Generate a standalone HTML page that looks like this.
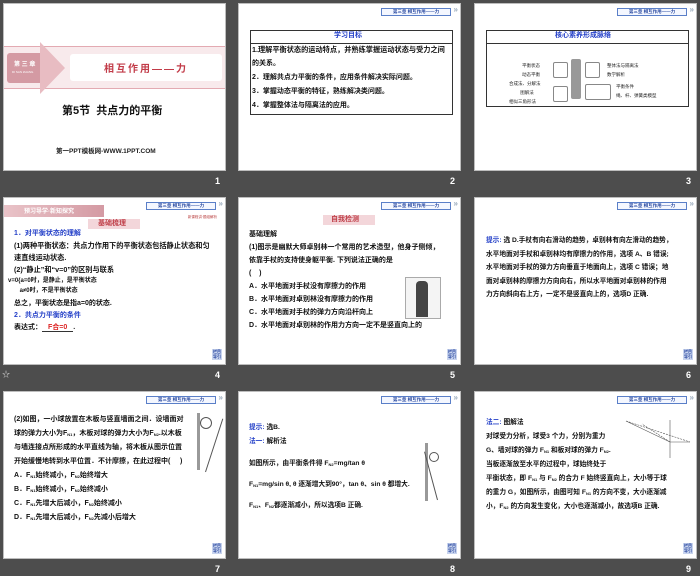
<!DOCTYPE html>
<html><head><meta charset="utf-8"><style>
*{margin:0;padding:0;box-sizing:border-box}
body{width:700px;height:576px;background:#4d4d4d;position:relative;overflow:hidden;font-family:"Liberation Sans","Noto Sans CJK SC",sans-serif}
.s{position:absolute;width:223px;height:168px;background:#fff;border:1px solid #bdbdbd;overflow:hidden}
.n{position:absolute;color:#fff;font-size:9px;font-weight:bold}
.tag{position:absolute;right:9px;top:4px;width:70px;height:8px;border:1px solid #5a7fc8;font-size:4.5px;color:#2a4aa0;font-weight:bold;text-align:center;line-height:6px;background:#f4f7ff}
.tag:after{content:"»";position:absolute;right:-8px;top:-2px;color:#9ab;font-size:8px}
.ic{position:absolute;right:3px;bottom:4px;width:10px;height:11px;background:#c8d4ee;font-size:4px;color:#2a48a0;line-height:5px;text-align:center;font-weight:bold}
.t{position:absolute;font-size:7px;font-weight:bold;color:#111;white-space:nowrap;line-height:14px}
.b{color:#2440c8}
sub{font-size:4px;line-height:0;vertical-align:-1px}
</style></head><body>

<!-- slide 1 -->
<div class="s" style="left:3px;top:3px">
 <div style="position:absolute;left:0;top:42px;width:223px;height:43px;background:#f8eaec;border-top:1px solid #e3aab2;border-bottom:1px solid #e3aab2"></div>
 <div style="position:absolute;left:3px;top:49px;width:42px;height:30px;background:#d49aa3;border-radius:3px"></div>
 <div style="position:absolute;left:36px;top:38px;width:0;height:0;border-top:26px solid transparent;border-bottom:26px solid transparent;border-left:25px solid #e8bcc2"></div>
 <div style="position:absolute;left:10px;top:55px;color:#fff;font-size:6px;font-weight:bold">第 三 章</div>
 <div style="position:absolute;left:8px;top:66px;color:#fff;font-size:3px">DI SAN ZHANG</div>
 <div style="position:absolute;left:66px;top:50px;width:152px;height:27px;background:#fff;border-radius:3px"></div>
 <div style="position:absolute;left:100px;top:56px;color:#c23b48;font-size:10px;font-weight:bold;letter-spacing:2px">相互作用——力</div>
 <div style="position:absolute;left:58px;top:98px;font-size:11px;font-weight:bold;color:#111">第5节 &nbsp;共点力的平衡</div>
 <div style="position:absolute;left:52px;top:141px;font-size:6.5px;font-weight:bold;color:#222">第一PPT模板网-WWW.1PPT.COM</div>
</div>
<div class="n" style="left:215px;top:176px">1</div>

<!-- slide 2 -->
<div class="s" style="left:238px;top:3px">
 <div class="tag">第三章 相互作用——力</div>
 <div style="position:absolute;left:11px;top:26px;width:203px;height:85px;border:1px solid #333"></div>
 <div style="position:absolute;left:11px;top:39px;width:203px;border-top:1px solid #333"></div>
 <div class="t b" style="left:95px;top:25px;line-height:14px">学习目标</div>
 <div class="t" style="left:13px;top:39px;font-size:7.2px">1.理解平衡状态的运动特点，并熟练掌握运动状态与受力之间</div>
 <div class="t" style="left:13px;top:53px;font-size:7px">的关系。</div>
 <div class="t" style="left:13px;top:67px;font-size:7px">2．理解共点力平衡的条件，应用条件解决实际问题。</div>
 <div class="t" style="left:13px;top:81px;font-size:7px">3．掌握动态平衡的特征，熟练解决类问题。</div>
 <div class="t" style="left:13px;top:95px;font-size:7px">4．掌握整体法与隔离法的应用。</div>
</div>
<div class="n" style="left:450px;top:176px">2</div>

<!-- slide 3 -->
<div class="s" style="left:474px;top:3px">
 <div class="tag">第三章 相互作用——力</div>
 <div style="position:absolute;left:11px;top:26px;width:203px;height:77px;border:1px solid #333"></div>
 <div style="position:absolute;left:11px;top:39px;width:203px;border-top:1px solid #333"></div>
 <div class="t b" style="left:80px;top:25px">核心素养形成脉络</div>
 <div style="position:absolute;left:96px;top:55px;width:10px;height:40px;background:#999;border-radius:2px"></div>
 <div style="position:absolute;left:47px;top:57px;font-size:4.5px;line-height:9px;color:#222">平衡状态<br>动态平衡</div>
 <div style="position:absolute;left:34px;top:75px;font-size:4.5px;line-height:9px;color:#222">合成法、分解法<br>&nbsp;&nbsp;&nbsp;&nbsp;&nbsp;&nbsp;&nbsp;&nbsp;&nbsp;图解法<br>相似三角形法</div>
 <div style="position:absolute;left:78px;top:58px;width:15px;height:16px;border:1px solid #888;border-radius:2px"></div>
 <div style="position:absolute;left:78px;top:82px;width:15px;height:16px;border:1px solid #888;border-radius:2px"></div>
 <div style="position:absolute;left:110px;top:58px;width:15px;height:16px;border:1px solid #888;border-radius:2px"></div>
 <div style="position:absolute;left:110px;top:80px;width:26px;height:16px;border:1px solid #888;border-radius:2px"></div>
 <div style="position:absolute;left:132px;top:57px;font-size:4.5px;line-height:9px;color:#222">整体法与隔离法<br>数学解析</div>
 <div style="position:absolute;left:141px;top:78px;font-size:4.5px;line-height:9px;color:#222">平衡条件<br>绳、杆、弹簧类模型</div>
</div>
<div class="n" style="left:686px;top:176px">3</div>

<!-- slide 4 -->
<div class="s" style="left:3px;top:197px">
 <div class="tag">第三章 相互作用——力</div>
 <div style="position:absolute;left:0;top:7px;width:100px;height:12px;background:linear-gradient(90deg,#e9c3c8,#d49aa3)"></div>
 <div style="position:absolute;left:20px;top:8px;font-size:6px;color:#fff;font-weight:bold">预习导学·新知探究</div>
 <div style="position:absolute;right:8px;top:17px;font-size:3.5px;color:#b44">新课程讲·题组解析</div>
 <div style="position:absolute;left:84px;top:21px;width:52px;height:10px;background:#f3d6da"></div>
 <div class="t" style="left:94px;top:19px;color:#c0404a">基础梳理</div>
 <div class="t b" style="left:10px;top:30px;font-size:7px;line-height:12px">1．对平衡状态的理解</div>
 <div class="t" style="left:10px;top:42px;font-size:7.2px;line-height:12px">(1)两种平衡状态：共点力作用下的平衡状态包括静止状态和匀<br>速直线运动状态.<br>(2)“静止”和“v=0”的区别与联系</div>
 <div class="t" style="left:4px;top:78px;font-size:6px;line-height:10px">v=0{a=0时，是静止，是平衡状态<br>&nbsp;&nbsp;&nbsp;&nbsp;&nbsp;&nbsp;&nbsp;a≠0时，不是平衡状态</div>
 <div class="t" style="left:10px;top:100px;font-size:7px;line-height:12px">总之，平衡状态是指a=0的状态.</div>
 <div class="t b" style="left:10px;top:112px;font-size:7px;line-height:12px">2．共点力平衡的条件</div>
 <div class="t" style="left:10px;top:124px;font-size:7px;line-height:12px">表达式：<span style="color:#d22;border-bottom:1px solid #333;padding:0 6px">F合=0</span>.</div>
 <div class="ic">栏目<br>导引</div>
</div>
<div style="position:absolute;left:2px;top:369px;color:#ddd;font-size:8px">☆</div>
<div class="n" style="left:215px;top:370px">4</div>

<!-- slide 5 -->
<div class="s" style="left:238px;top:197px">
 <div class="tag">第三章 相互作用——力</div>
 <div style="position:absolute;left:84px;top:17px;width:52px;height:10px;background:#f3d6da"></div>
 <div class="t" style="left:92px;top:15px;color:#c0404a">自我检测</div>
 <div class="t" style="left:10px;top:30px;font-size:7px;line-height:13px">基础理解<br>(1)图示是幽默大师卓别林一个常用的艺术造型，他身子侧倾，<br>依靠手杖的支持使身躯平衡. 下列说法正确的是<br>(&nbsp;&nbsp;&nbsp;&nbsp;)<br>A．水平地面对手杖没有摩擦力的作用<br>B．水平地面对卓别林没有摩擦力的作用<br>C．水平地面对手杖的弹力方向沿杆向上<br>D．水平地面对卓别林的作用力方向一定不是竖直向上的</div>
 <div style="position:absolute;left:166px;top:79px;width:36px;height:42px;border:1px solid #aaa;background:#f4f4f4">
  <div style="position:absolute;left:10px;top:3px;width:12px;height:36px;background:#444;border-radius:4px 4px 0 0"></div>
 </div>
 <div class="ic">栏目<br>导引</div>
</div>
<div class="n" style="left:450px;top:370px">5</div>

<!-- slide 6 -->
<div class="s" style="left:474px;top:197px">
 <div class="tag">第三章 相互作用——力</div>
 <div class="t" style="left:11px;top:36px;font-size:6.7px;line-height:13.5px"><span class="b">提示:</span> 选 D.手杖有向右滑动的趋势，卓别林有向左滑动的趋势，<br>水平地面对手杖和卓别林均有摩擦力的作用，选项 A、B 错误;<br>水平地面对手杖的弹力方向垂直于地面向上，选项 C 错误；地<br>面对卓别林的摩擦力方向向右，所以水平地面对卓别林的作用<br>力方向斜向右上方，一定不是竖直向上的，选项D 正确.</div>
 <div class="ic">栏目<br>导引</div>
</div>
<div class="n" style="left:686px;top:370px">6</div>

<!-- slide 7 -->
<div class="s" style="left:3px;top:391px">
 <div class="tag">第三章 相互作用——力</div>
 <div class="t" style="left:10px;top:21px;font-size:7px;line-height:14px">(2)如图，一小球放置在木板与竖直墙面之间．设墙面对<br>球的弹力大小为F<sub>N1</sub>，木板对球的弹力大小为F<sub>N2</sub>.以木板<br>与墙连接点所形成的水平直线为轴，将木板从图示位置<br>开始缓慢地转到水平位置．不计摩擦，在此过程中(&nbsp;&nbsp;&nbsp;&nbsp;&nbsp;)<br>A．F<sub>N1</sub>始终减小，F<sub>N2</sub>始终增大<br>B．F<sub>N1</sub>始终减小，F<sub>N2</sub>始终减小<br>C．F<sub>N1</sub>先增大后减小，F<sub>N2</sub>始终减小<br>D．F<sub>N1</sub>先增大后减小，F<sub>N2</sub>先减小后增大</div>
 <div style="position:absolute;left:193px;top:21px;width:3px;height:57px;background:#999"></div>
 <div style="position:absolute;left:196px;top:25px;width:12px;height:12px;border:1px solid #555;border-radius:50%"></div>
 <div style="position:absolute;left:201px;top:24px;width:1px;height:56px;background:#555;transform:rotate(18deg);transform-origin:bottom"></div>
 <div class="ic">栏目<br>导引</div>
</div>
<div class="n" style="left:215px;top:564px">7</div>

<!-- slide 8 -->
<div class="s" style="left:238px;top:391px">
 <div class="tag">第三章 相互作用——力</div>
 <div class="t" style="left:10px;top:29px;font-size:6.7px;line-height:14px"><span class="b">提示:</span> 选B.<br><span class="b">法一:</span> 解析法</div>
 <div class="t" style="left:10px;top:61px;font-size:6.7px;line-height:21px">如图所示，由平衡条件得 F<sub>N2</sub>=mg/tan θ<br>F<sub>N1</sub>=mg/sin θ, θ 逐渐增大到90°，tan θ、sin θ 都增大.</div>
 <div class="t" style="left:10px;top:107px;font-size:6.7px;line-height:14px">F<sub>N1</sub>、F<sub>N2</sub>都逐渐减小，所以选项B 正确.</div>
 <div style="position:absolute;left:186px;top:51px;width:3px;height:58px;background:#999"></div>
 <div style="position:absolute;left:190px;top:60px;width:10px;height:10px;border:1px solid #555;border-radius:50%"></div>
 <div style="position:absolute;left:198px;top:58px;width:1px;height:50px;background:#555;transform:rotate(-15deg);transform-origin:bottom"></div>
 <div class="ic">栏目<br>导引</div>
</div>
<div class="n" style="left:450px;top:564px">8</div>

<!-- slide 9 -->
<div class="s" style="left:474px;top:391px">
 <div class="tag">第三章 相互作用——力</div>
 <div class="t" style="left:11px;top:24px;font-size:6.7px;line-height:14px"><span class="b">法二:</span> 图解法<br>对球受力分析，球受3 个力，分别为重力<br>G、墙对球的弹力 F<sub>N1</sub> 和板对球的弹力 F<sub>N2</sub>.<br>当板逐渐放至水平的过程中，球始终处于<br>平衡状态，即 F<sub>N1</sub> 与 F<sub>N2</sub> 的合力 F 始终竖直向上，大小等于球<br>的重力 G，如图所示，由图可知 F<sub>N1</sub> 的方向不变，大小逐渐减<br>小，F<sub>N2</sub> 的方向发生变化，大小也逐渐减小，故选项B 正确.</div>
 <svg style="position:absolute;left:145px;top:24px" width="75" height="45"><g stroke="#555" stroke-width="0.6" fill="none"><line x1="50" y1="26" x2="6" y2="5"/><line x1="50" y1="26" x2="70" y2="26"/><line x1="50" y1="26" x2="50" y2="42"/><line x1="50" y1="26" x2="50" y2="4"/><line x1="50" y1="26" x2="22" y2="8" stroke-dasharray="2 1"/><line x1="6" y1="5" x2="70" y2="26" stroke-dasharray="2 1"/></g></svg>
 <div class="ic">栏目<br>导引</div>
</div>
<div class="n" style="left:686px;top:564px">9</div>

</body></html>
